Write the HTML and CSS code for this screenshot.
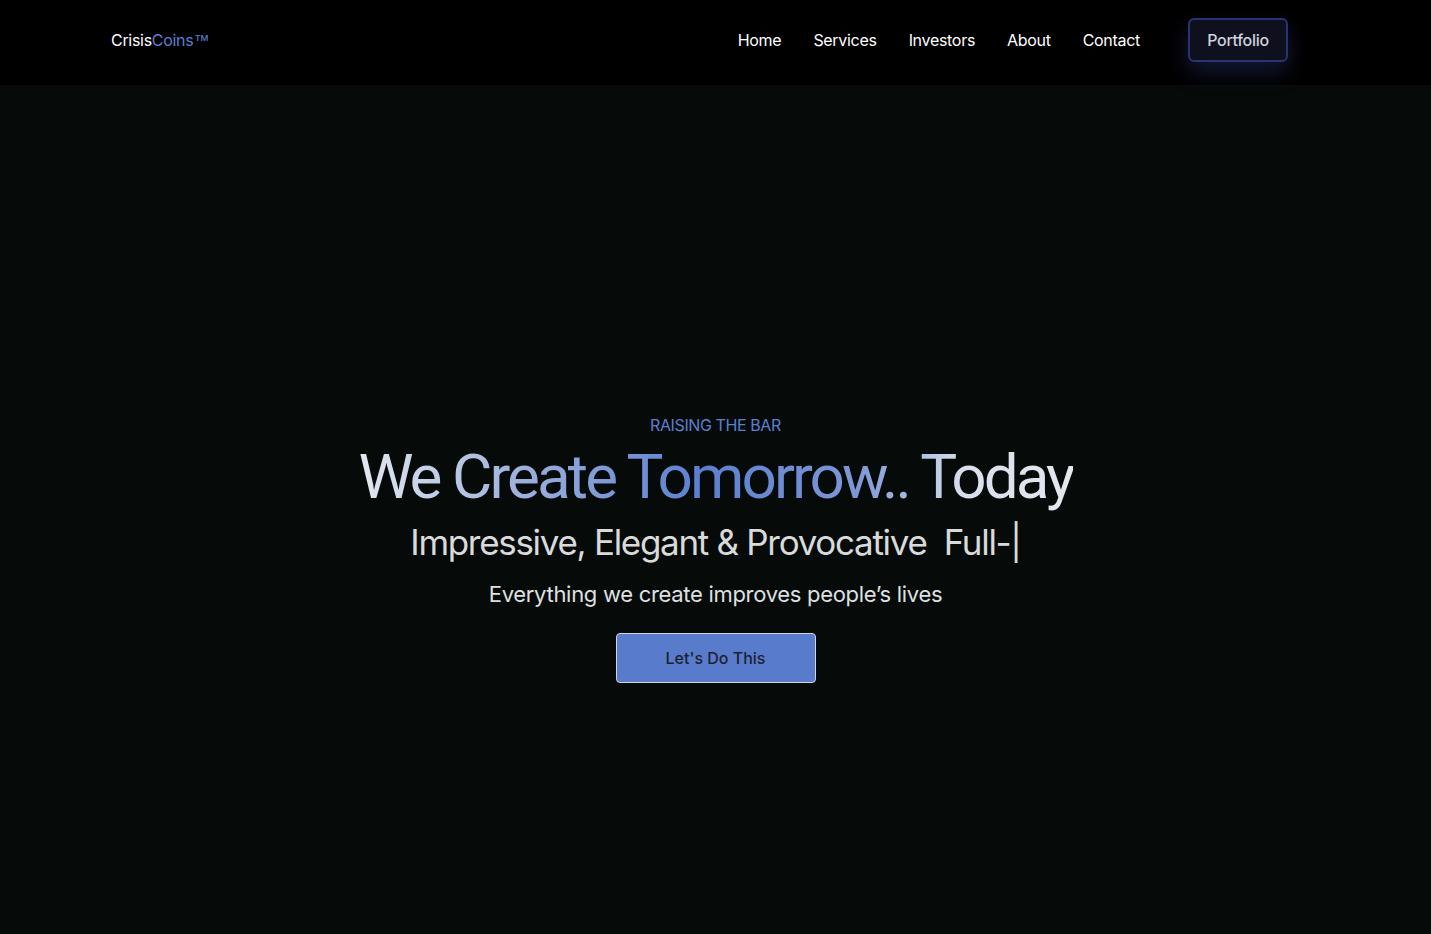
FILE: index.html
```html
<!DOCTYPE html>
<html lang="en">
<head>
<meta charset="utf-8">
<title>CrisisCoins</title>
<link rel="stylesheet" href="styles.css">
</head>
<body>
<header class="topbar">
  <div class="brand">Crisis<span class="brand-accent">Coins<span class="tm">™</span></span></div>
  <nav class="nav">
    <a class="nav-link" href="#">Home</a>
    <a class="nav-link" href="#">Services</a>
    <a class="nav-link" href="#">Investors</a>
    <a class="nav-link" href="#">About</a>
    <a class="nav-link nav-link-last" href="#">Contact</a>
    <a class="nav-btn" href="#">Portfolio</a>
  </nav>
</header>
<main class="hero">
  <p class="eyebrow">RAISING THE BAR</p>
  <h1 class="headline">We Create Tomorrow.. Today</h1>
  <h2 class="subline">Impressive, Elegant &amp; Provocative&nbsp; Full-|</h2>
  <p class="lead">Everything we create improves people’s lives</p>
  <a class="cta" href="#">Let's Do This</a>
</main>
</body>
</html>
```
FILE: styles.css
```css
* { box-sizing: border-box; }
html, body { margin: 0; padding: 0; }
body {
  background: #060b09;
  font-family: Inter, "Noto Sans", sans-serif;
  color: #fff;
  min-height: 934px;
}
.topbar {
  height: 85px;
  background: #000;
  display: flex;
  align-items: center;
  justify-content: space-between;
  padding: 0 143px 5px 111px;
}
.brand {
  font-size: 16px;
  color: #fff;
  letter-spacing: -0.3px;
}
.brand-accent { color: #5b7fd1; }
.tm {
  font-family: "Liberation Sans", sans-serif;
  font-size: 16px;
  letter-spacing: 0;
}
.nav {
  display: flex;
  align-items: center;
}
.nav-link {
  color: #fff;
  text-decoration: none;
  font-size: 16px;
  letter-spacing: -0.3px;
  margin-right: 32px;
}
.nav-link-last { margin-right: 48px; }
.nav-btn {
  display: flex;
  align-items: center;
  justify-content: center;
  width: 100px;
  height: 44px;
  border: 2px solid #2b3373;
  border-radius: 6px;
  background: #0e111d;
  color: #cfd3de;
  text-decoration: none;
  font-size: 16px;
  font-weight: 500;
  letter-spacing: -0.3px;
  box-shadow: 0 10px 22px rgba(56, 68, 150, 0.35);
}
.hero {
  display: flex;
  flex-direction: column;
  align-items: center;
  padding-top: 328px;
}
.eyebrow {
  margin: 0;
  font-size: 16px;
  color: #5b7fd1;
  line-height: 24px;
  letter-spacing: -0.4px;
}
.headline {
  margin: 2px 0 0;
  font-family: Roboto, Inter, sans-serif;
  font-size: 62px;
  font-weight: 400;
  letter-spacing: -2.9px;
  line-height: 76px;
  background: linear-gradient(90deg, #e4e8ef 0%, #9fb2dc 22%, #5b7fd0 48%, #7e98d6 70%, #d9dfec 85%, #e4e8ef 100%);
  -webkit-background-clip: text;
  background-clip: text;
  color: transparent;
}
.subline {
  margin: 2px 0 0;
  font-size: 35px;
  font-weight: 400;
  letter-spacing: -1.3px;
  line-height: 50px;
  color: #d9dadb;
}
.lead {
  margin: 12px 0 0;
  font-size: 22px;
  line-height: 30px;
  letter-spacing: -0.3px;
  color: #dfe0e1;
}
.cta {
  margin-top: 24px;
  width: 200px;
  height: 50px;
  display: flex;
  align-items: center;
  justify-content: center;
  background: #597bcb;
  border: 1px solid #d0d4dc;
  border-radius: 4px;
  color: #1c2130;
  font-size: 16px;
  font-weight: 500;
  text-decoration: none;
}
```
